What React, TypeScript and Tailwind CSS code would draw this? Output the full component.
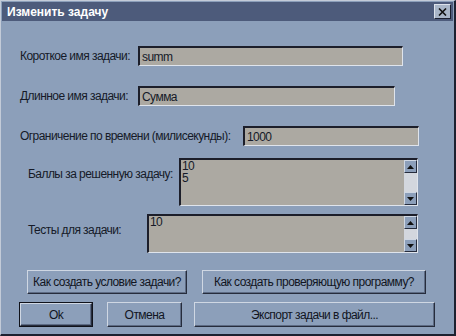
// Task edit dialog, old-school Win9x look with a slate-blue theme.

const font = "font-['Liberation_Sans',Arial,sans-serif]";

function Sunken({ className, children }: { className: string; children?: React.ReactNode }) {
  return (
    <div
      className={`flex shrink-0 border-t-2 border-l-2 border-b border-r border-t-[#1c1e2a] border-l-[#1c1e2a] border-b-[#dfe4ec] border-r-[#dfe4ec] bg-[#aca9a2] ${className}`}
    >
      {children}
    </div>
  );
}

function Btn({ className, label, primary }: { className: string; label: string; primary?: boolean }) {
  const inner = (
    <div className="flex h-full w-full items-center justify-center whitespace-nowrap border border-t-[#cfd7e3] border-l-[#cfd7e3] border-b-[#262c3c] border-r-[#262c3c] bg-[#8c9fba] leading-none text-[#111522] shadow-[inset_-1px_-1px_0_#5d6b84]">
      {label}
    </div>
  );
  return primary ? (
    <div className={`shrink-0 border border-[#10121a] ${className}`}>{inner}</div>
  ) : (
    <div className={`shrink-0 ${className}`}>{inner}</div>
  );
}

function ScrollBtn({ up }: { up?: boolean }) {
  return (
    <div className="flex h-[13px] w-[13px] items-center justify-center border border-t-[#cfd7e3] border-l-[#cfd7e3] border-b-[#262c3c] border-r-[#262c3c] bg-[#8c9fba]">
      <svg width="7" height="4" viewBox="0 0 7 4">
        {up ? <path d="M3.5 0 L7 4 L0 4 Z" fill="#111" /> : <path d="M0 0 L7 0 L3.5 4 Z" fill="#111" />}
      </svg>
    </div>
  );
}

function ScrollBar() {
  return (
    <div className="flex w-[13px] flex-col">
      <ScrollBtn up />
      <div className="flex-1 bg-[#d3d7de]" />
      <ScrollBtn />
    </div>
  );
}

export default function App() {
  return (
    <div
      className={`${font} flex h-[336px] w-[456px] flex-col overflow-hidden border-t border-l border-b-2 border-r-2 border-t-[#c3cbd8] border-l-[#c3cbd8] border-b-[#1d2130] border-r-[#1d2130] bg-[#8c9fba] text-[12px] leading-[14px] tracking-[-0.55px] text-[#151a28]`}
    >
      {/* title bar */}
      <div className="mx-[1px] mt-[1px] flex h-[19px] shrink-0 items-center justify-between bg-[#4d5b7b] pl-[5px] pr-[2px]">
        <span className="text-[12px] font-bold tracking-[0px] text-white">Изменить задачу</span>
        <div className="flex h-[15px] w-[17px] items-center justify-center border border-t-[#dde3ec] border-l-[#dde3ec] border-b-[#1c2030] border-r-[#1c2030] bg-[#a9b6c8]">
          <svg width="9" height="8" viewBox="0 0 9 8">
            <path d="M1 0.5 L8 7.5 M8 0.5 L1 7.5" stroke="#111" strokeWidth="1.6" />
          </svg>
        </div>
      </div>

      {/* short name */}
      <div className="mt-[25px] flex items-center pl-[19px]">
        <span className="w-[118px] shrink-0 whitespace-nowrap">Короткое имя задачи:</span>
        <Sunken className="h-[20px] w-[265px] items-center pl-[2px]">summ</Sunken>
      </div>

      {/* long name */}
      <div className="mt-[20px] flex items-center pl-[19px]">
        <span className="w-[118px] shrink-0 whitespace-nowrap">Длинное имя задачи:</span>
        <Sunken className="h-[20px] w-[257px] items-center pl-[2px]">Сумма</Sunken>
      </div>

      {/* time limit */}
      <div className="mt-[20px] flex items-center pl-[19px]">
        <span className="w-[223px] shrink-0 whitespace-nowrap">Ограничение по времени (милисекунды):</span>
        <Sunken className="h-[20px] w-[176px] items-center pl-[2px]">1000</Sunken>
      </div>

      {/* points */}
      <div className="mt-[12px] flex items-start pl-[27px]">
        <span className="mt-[9px] w-[151px] shrink-0 whitespace-nowrap">Баллы за решенную задачу:</span>
        <Sunken className="h-[48px] w-[239px] justify-between">
          <div className="pl-[1px] leading-[12px]">
            10
            <br />5
          </div>
          <ScrollBar />
        </Sunken>
      </div>

      {/* tests */}
      <div className="mt-[8px] flex items-start pl-[27px]">
        <span className="mt-[9px] w-[119px] shrink-0 whitespace-nowrap">Тесты для задачи:</span>
        <Sunken className="h-[39px] w-[271px] justify-between">
          <div className="pl-[1px] leading-[13px]">10</div>
          <ScrollBar />
        </Sunken>
      </div>

      {/* help buttons */}
      <div className="mt-[17px] flex gap-[15px] pl-[26px]">
        <Btn className="h-[24px] w-[160px]" label="Как создать условие задачи?" />
        <Btn className="h-[24px] w-[224px]" label="Как создать проверяющую программу?" />
      </div>

      {/* action buttons */}
      <div className="mt-[8px] flex pl-[18px]">
        <Btn primary className="h-[25px] w-[74px]" label="Ok" />
        <Btn className="ml-[14px] h-[25px] w-[75px]" label="Отмена" />
        <Btn className="ml-[12px] h-[25px] w-[241px]" label="Экспорт задачи в файл..." />
      </div>
    </div>
  );
}
